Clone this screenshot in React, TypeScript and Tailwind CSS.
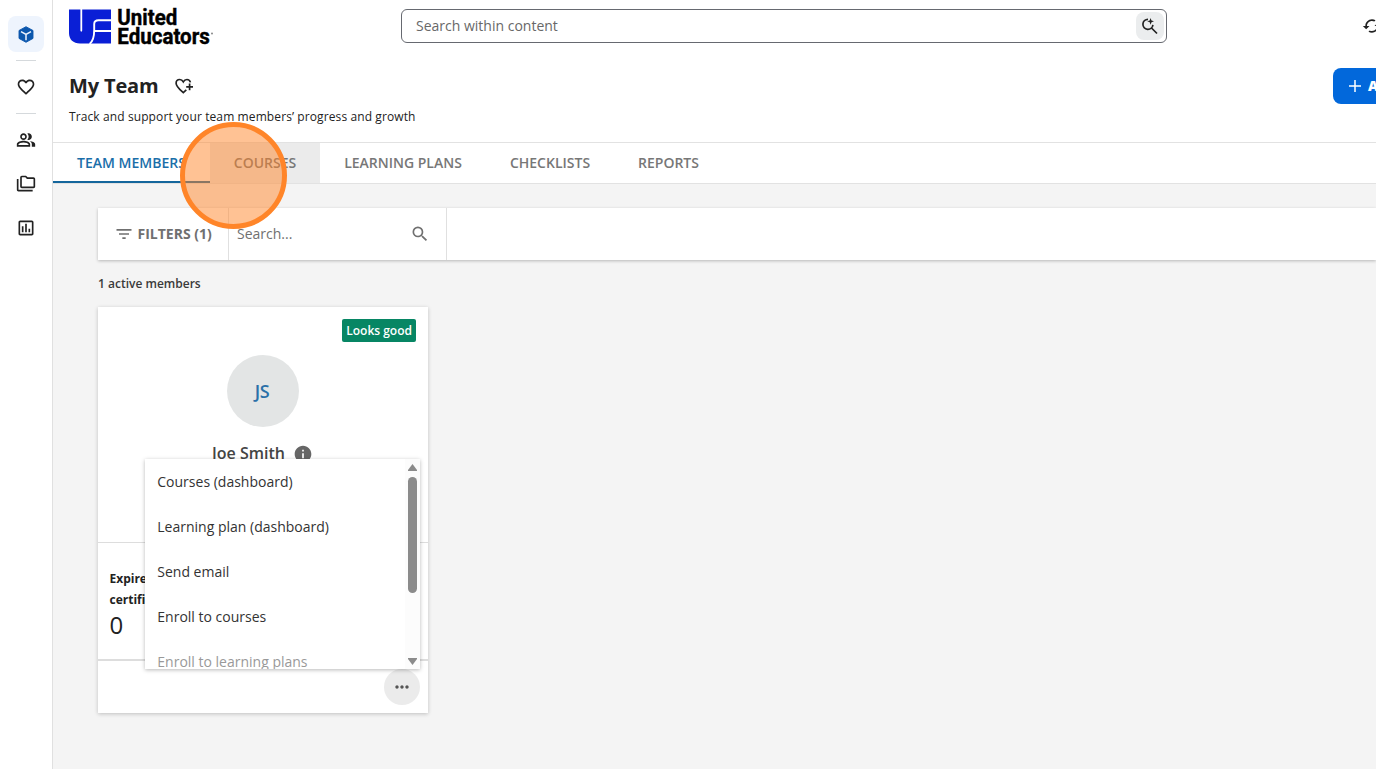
import React from 'react';
import {
  MdCached,
  MdFavoriteBorder,
  MdFilterList,
  MdInfo,
  MdMoreHoriz,
  MdOutlineFolderCopy,
  MdOutlineInsertChart,
  MdOutlinePeopleAlt,
  MdSearch,
} from 'react-icons/md';

const tabs = [
  { label: 'Team members', width: 'w-[157px]', style: 'text-[#1a6ea9] border-[#14669c]' },
  { label: 'Courses', width: 'w-[110px]', style: 'text-[#777] bg-[#ebebeb] border-[#ebebeb]' },
  { label: 'Learning plans', width: 'w-[166px]', style: 'text-[#777] border-transparent' },
  { label: 'Checklists', width: 'w-[128px]', style: 'text-[#777] border-transparent' },
  { label: 'Reports', width: 'w-[109px]', style: 'text-[#777] border-transparent' },
];

const menuItems = [
  { label: 'Courses (dashboard)', disabled: false },
  { label: 'Learning plan (dashboard)', disabled: false },
  { label: 'Send email', disabled: false },
  { label: 'Enroll to courses', disabled: false },
  { label: 'Enroll to learning plans', disabled: true },
];

const CubeIcon = () => (
  <svg width="16" height="17" viewBox="0 0 16 17">
    <path d="M8 0.7 15 4.5V12.4L8 16.3 1 12.4V4.5Z" fill="#0b57ad" stroke="#0b57ad" strokeWidth="0.9" strokeLinejoin="round" />
    <path d="M3 5.7 8 8.5 13 5.7M8 8.5V14.2" fill="none" stroke="#edf4fd" strokeWidth="1.5" />
  </svg>
);

const HeartPlusIcon = () => (
  <svg width="20" height="18" viewBox="0 0 20 18" fill="none" stroke="#222" strokeWidth="1.7">
    <path d="M11.3 12.9 8.3 15.7 7.2 14.7C3.4 11.2 1.1 9 1.1 6.2 1.1 4 2.7 2.5 4.7 2.5c1.5 0 2.8.9 3.6 2.3C9.1 3.4 10.4 2.5 11.9 2.5c1.8 0 3.1 1.1 3.5 2.9" />
    <path d="M14.6 6.4v6.8M11.2 9.8H18" />
  </svg>
);

const SmartSearchIcon = () => (
  <svg width="18" height="18" viewBox="0 0 18 18" fill="none" stroke="#222" strokeWidth="1.7">
    <path d="M7 2.3A5 5 0 1 0 11.9 7.8M10.5 11 16 16.5" />
    <path d="M9.6.9 10.5 3.4 13 4.3 10.5 5.2 9.6 7.7 8.7 5.2 6.2 4.3 8.7 3.4Z" fill="#222" stroke="none" />
  </svg>
);

const Logo = () => (
  <svg width="146" height="40" viewBox="0 0 146 40" overflow="visible">
    <path d="M0 3.5H42V37.5H11C4.2 37.5 0 33.4 0 27Z" fill="#0a1fd6" />
    <path d="M11.4 3V24.3C11.4 26.2 13.2 26.2 13.2 24.3V3Z" fill="#fff" />
    <path d="M42.5 14.3H29.6C26.6 14.3 25.2 15.4 25.2 18V25H42.5M25.2 24C25.2 32 24 35.4 20.6 38" fill="none" stroke="#fff" strokeWidth="1.9" />
    <g fontFamily="Roboto, sans-serif" fontWeight="700" fontSize="22" fill="#000" stroke="#000" strokeWidth="0.4">
      <text x="48.3" y="19" textLength="60" lengthAdjust="spacingAndGlyphs">United</text>
      <text x="48.3" y="37.6" textLength="92.5" lengthAdjust="spacingAndGlyphs">Educators</text>
    </g>
    <circle cx="143" cy="27.5" r="1" fill="#888" />
  </svg>
);

const Sidebar = () => (
  <aside className="flex w-[53px] shrink-0 flex-col items-center border-r border-[#e0e0e0] bg-white text-[#222]">
    <div className="mt-4 flex h-9 w-9 items-center justify-center rounded-lg bg-[#eef4fd]">
      <CubeIcon />
    </div>
    <div className="mt-2 h-px w-5 bg-[#d5d9dc]" />
    <MdFavoriteBorder className="mt-4 h-5 w-5" />
    <div className="mt-4 h-px w-5 bg-[#d5d9dc]" />
    <MdOutlinePeopleAlt className="mt-4 h-5 w-5" />
    <MdOutlineFolderCopy className="mt-6 h-5 w-5" />
    <MdOutlineInsertChart className="mt-6 h-5 w-5" />
  </aside>
);

const Header = () => (
  <header className="h-[142px] w-[1420px] pl-4">
    <div className="flex h-[52px] items-center">
      <div className="w-[332px] shrink-0">
        <Logo />
      </div>
      <div className="flex h-[34px] w-[766px] items-center justify-between rounded-md border border-[#666970] pr-[2px] pl-[14px]">
        <span className="text-sm text-[#686868]">Search within content</span>
        <button className="flex h-7 w-7 items-center justify-center rounded-lg bg-[#ebedee]">
          <SmartSearchIcon />
        </button>
      </div>
      <MdCached className="ml-[195px] h-5 w-5 text-[#222]" />
    </div>
    <div className="mt-4 flex h-9 items-center">
      <h1 className="w-[106px] text-xl font-bold tracking-[-0.15px] text-[#222]">My Team</h1>
      <HeartPlusIcon />
      <button className="ml-[1138px] flex h-9 w-[130px] shrink-0 items-center rounded-lg bg-[#0268db] pl-4 text-white">
        <svg width="12" height="12" viewBox="0 0 12 12" stroke="currentColor" strokeWidth="1.5">
          <path d="M6 0V12M0 6H12" />
        </svg>
        <span className="ml-[7px] text-sm font-extrabold">Add</span>
      </button>
    </div>
    <p className="mt-1 text-xs leading-[18px] tracking-[0.105px] text-[#222]">Track and support your team members’ progress and growth</p>
  </header>
);

const Tabs = () => (
  <nav className="flex h-[42px] border-y border-[#e2e2e2] bg-white">
    {tabs.map((tab) => (
      <button
        key={tab.label}
        className={`flex shrink-0 items-center justify-center border-b-2 pt-px text-sm font-semibold uppercase ${tab.width} ${tab.style}`}
      >
        {tab.label}
      </button>
    ))}
  </nav>
);

const ActionsMenu = () => (
  <div className="absolute top-[152px] left-[47px] flex h-[210px] w-[275px] overflow-hidden bg-white shadow-[0_1px_4px_rgba(0,0,0,0.28)]">
    <ul className="flex-1">
      {menuItems.map((item) => (
        <li key={item.label} className={`flex h-[45px] items-center pl-[12.3px] text-sm ${item.disabled ? 'text-[#999]' : 'text-[#333]'}`}>
          {item.label}
        </li>
      ))}
    </ul>
    {/* scrollbar */}
    <div className="flex w-[15px] flex-col items-center bg-[#fcfcfc] pt-[5px] text-[#8b8b8b]">
      <svg width="9" height="7" viewBox="0 0 9 7" fill="currentColor"><path d="M4.5 0 9 6V7H0V6Z" /></svg>
      <div className="mt-[6px] h-[116px] w-[9px] rounded-full bg-[#8b8b8b]" />
      <svg className="mt-[65px]" width="9" height="7" viewBox="0 0 9 7" fill="currentColor"><path d="M4.5 7 9 1V0H0V1Z" /></svg>
    </div>
  </div>
);

const MemberCard = () => (
  <div className="relative mt-[14px] flex h-[406px] w-[330px] flex-col bg-white shadow-[0_1px_4px_rgba(0,0,0,0.22)]">
    <div className="flex h-[236px] flex-col items-center border-b border-[#ddd]">
      <span className="mt-3 mr-3 flex h-[23px] items-center self-end rounded-[2px] bg-[#078664] px-1 text-xs font-semibold text-white">Looks good</span>
      <div className="mt-[13px] flex h-[72px] w-[72px] items-center justify-center rounded-full bg-[#e3e5e5] pr-[2px] text-lg font-semibold tracking-[-0.3px] text-[#2a70a8]">JS</div>
      <div className="mt-[14px] flex items-center gap-[8px] pr-[1px] text-base font-semibold text-[#444]">
        Joe Smith
        <MdInfo className="mt-[2px] h-5 w-5 text-[#666]" />
      </div>
    </div>
    <div className="h-[118px] border-b-2 border-[#ddd] pt-[25px] pl-[11.5px] text-[#222]">
      <p className="w-20 text-xs leading-[21px] font-bold">Expired certificates</p>
      <p className="text-2xl leading-[29px]">0</p>
    </div>
    <div className="flex flex-1 items-start justify-end pt-[8px] pr-2">
      <button className="flex h-9 w-9 items-center justify-center rounded-full bg-[#ebebeb] text-[#555]">
        <MdMoreHoriz className="h-5 w-5" />
      </button>
    </div>
    <ActionsMenu />
  </div>
);

export default function App() {
  return (
    <div className="relative flex h-[769px] w-[1376px] overflow-hidden bg-white font-['Open_Sans',sans-serif]">
      <Sidebar />
      <div className="flex min-w-0 flex-1 flex-col">
        <Header />
        <Tabs />
        <main className="flex-1 bg-[#f4f4f4] pt-6 pl-[45px]">
          <div className="flex h-[52px] bg-white text-sm text-[#707070] shadow-[0_1px_3px_rgba(0,0,0,0.25)]">
            <button className="flex w-[131px] items-center gap-[3.5px] border-r border-[#e0e0e0] pl-4 font-bold">
              <MdFilterList className="h-5 w-5" />
              FILTERS (1)
            </button>
            <div className="flex w-[218px] items-center justify-between border-r border-[#e0e0e0] pr-4 pl-2">
              <span>Search...</span>
              <MdSearch className="h-5 w-5" />
            </div>
          </div>
          <p className="mt-[15px] text-xs leading-[18px] font-semibold text-[#3a3a3a]">1 active members</p>
          <MemberCard />
        </main>
      </div>
      {/* click highlight */}
      <div className="absolute top-[122px] left-[180px] h-[107px] w-[107px] rounded-full border-5 border-[#ff8529] bg-[#ff8529]/50" />
    </div>
  );
}
